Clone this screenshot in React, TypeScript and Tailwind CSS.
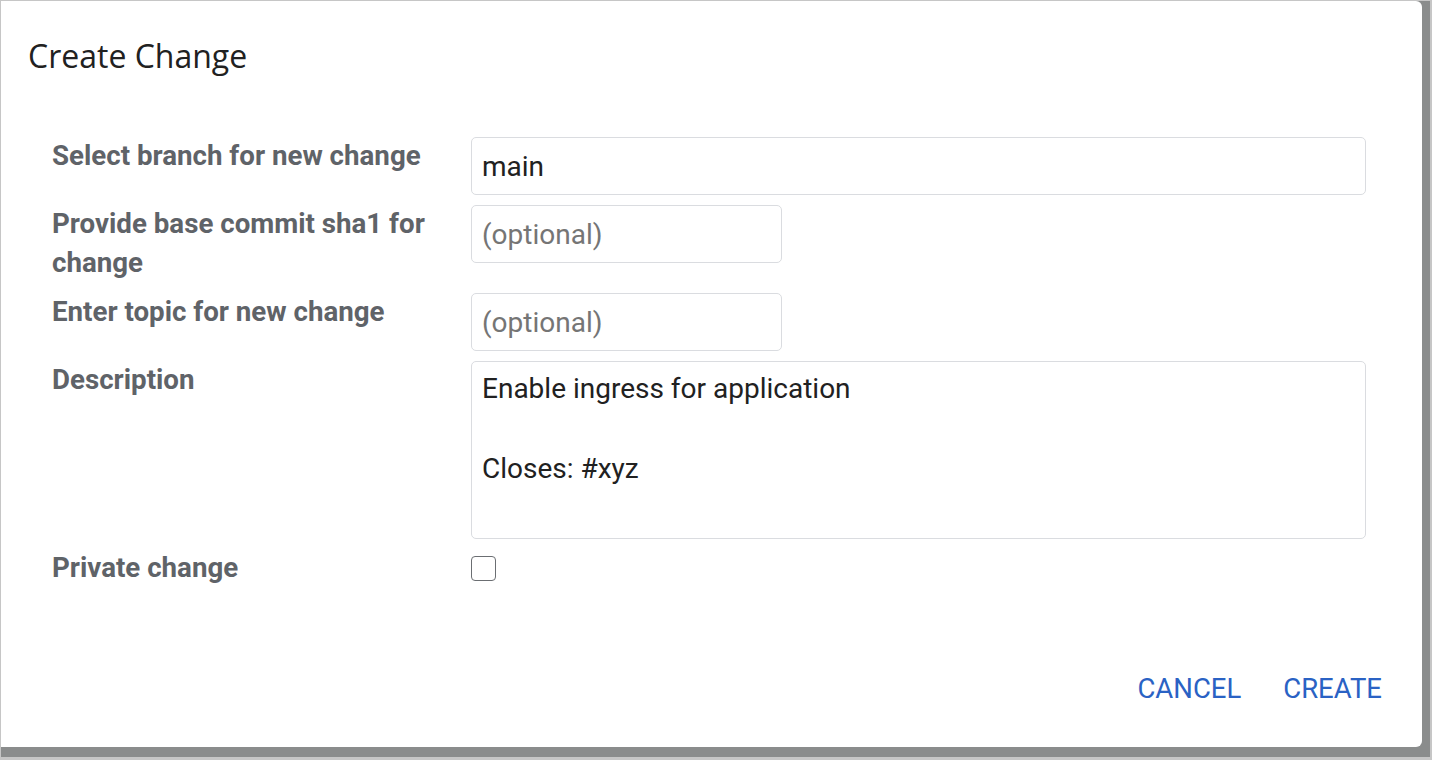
import React from "react"

const labelCls =
  "-mt-[1px] mb-[1px] w-[419px] shrink-0 pr-4 text-[27.7px] leading-[39px] font-bold text-[#5f6368]"
const inputCls =
  "h-[58px] rounded-[5px] border border-[#dadce0] bg-white pl-[10px] pt-[8px] pb-[8px] text-[28px] leading-[40px] text-[#212121] outline-none placeholder:text-[#757575]"

function Row({ label, children }: { label: string; children: React.ReactNode }) {
  return (
    <div className="flex items-start">
      <div className={labelCls}>{label}</div>
      {children}
    </div>
  )
}

export default function App() {
  return (
    <div
      className="flex h-[760px] w-[1432px] flex-col border-t border-l border-r-2 border-b-[3px] border-[#c6c6c6] bg-[#8a8c8c]"
      style={{ fontFamily: "Roboto, 'Liberation Sans', sans-serif" }}
    >
      <div className="flex h-[746px] w-[1421px] flex-col rounded-tr-[6px] rounded-br-[6px] bg-white">
        <h1
          className="pl-[27px] pt-[33px] text-[32px] leading-[44px] font-normal text-[#212121]"
          style={{ fontFamily: "'Open Sans', 'Noto Sans', sans-serif" }}
        >
          Create Change
        </h1>

        <div className="mt-[59px] flex flex-col gap-[10px] pl-[51px] pr-[55px]">
          <Row label="Select branch for new change">
            <input className={inputCls + " w-[895px]"} defaultValue="main" />
          </Row>
          <Row label="Provide base commit sha1 for change">
            <input className={inputCls + " w-[311px]"} placeholder="(optional)" />
          </Row>
          <Row label="Enter topic for new change">
            <input className={inputCls + " w-[311px]"} placeholder="(optional)" />
          </Row>
          <Row label="Description">
            <textarea
              className="h-[178px] w-[895px] resize-none rounded-[5px] border border-[#dadce0] bg-white pl-[10px] pt-[7px] text-[28px] leading-[40px] text-[#212121] outline-none"
              defaultValue={"Enable ingress for application\n\nCloses: #xyz"}
            />
          </Row>
          <Row label="Private change">
            <div className="flex h-[39px] items-center">
              <span className="block h-[25px] w-[25px] rounded-[4px] border-[1.5px] border-[#6b6e72] bg-white" />
            </div>
          </Row>
        </div>

        <div className="mt-[81px] flex justify-end pr-[19px]">
          <button className="px-[21px] text-[27.5px] leading-[40px] text-[#2a62c4]">CANCEL</button>
          <button className="px-[21px] text-[27.5px] leading-[40px] text-[#2a62c4]">CREATE</button>
        </div>
      </div>
    </div>
  )
}
